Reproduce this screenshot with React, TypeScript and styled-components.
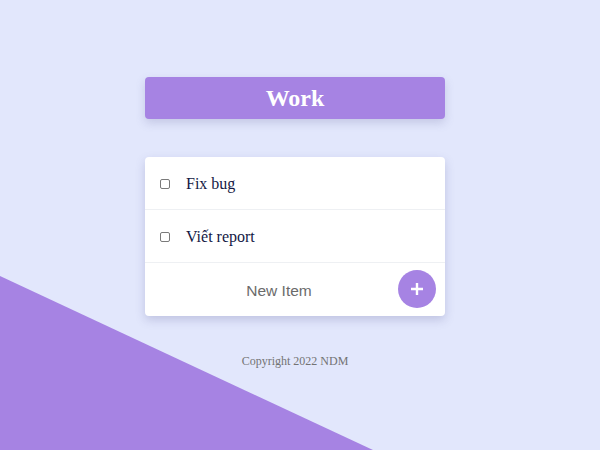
import React from "react";
import styled, { createGlobalStyle } from "styled-components";

const Global = createGlobalStyle`
  html, body { margin: 0; padding: 0; }
  body {
    background: #e2e7fc;
    font-family: "Liberation Serif", "Times New Roman", serif;
    overflow: hidden;
  }
`;

const Page = styled.div`
  position: relative;
  width: 600px;
  height: 450px;
  overflow: hidden;
`;

const Wedge = styled.div`
  position: absolute;
  left: 0;
  top: 0;
  width: 600px;
  height: 450px;
  background: #a683e3;
  clip-path: polygon(0 276px, 373px 450px, 0 450px);
`;

const Column = styled.main`
  position: relative;
  width: 300px;
  margin: 0 auto;
  padding-top: 77px;
  transform: translateX(-5px);
  display: flex;
  flex-direction: column;
`;

const Title = styled.h1`
  margin: 0;
  height: 42px;
  background: #a683e3;
  border-radius: 4px;
  box-shadow: 0 4px 10px rgba(90, 90, 150, 0.22);
  color: #fff;
  font-family: "Liberation Serif", "Times New Roman", serif;
  font-weight: bold;
  font-size: 24px;
  display: flex;
  align-items: center;
  justify-content: center;
`;

const Card = styled.section`
  margin-top: 38px;
  background: #fff;
  border-radius: 4px;
  box-shadow: 0 4px 10px rgba(90, 90, 150, 0.25);
  display: flex;
  flex-direction: column;
`;

const Row = styled.div`
  height: 53px;
  display: flex;
  align-items: center;
  padding-left: 15px;
  padding-top: 2px;
  border-bottom: 1px solid #eef0f3;
  box-sizing: border-box;
`;

const Check = styled.input`
  appearance: none;
  width: 10px;
  height: 10px;
  margin: 0 16px 0 0;
  border: 1px solid #7a7a7a;
  border-radius: 2px;
  background: #fff;
`;

const Label = styled.span`
  font-family: "Liberation Serif", "Times New Roman", serif;
  font-size: 16px;
  color: #131844;
`;

const Footer = styled.div`
  height: 53px;
  display: flex;
  align-items: center;
  position: relative;
`;

const NewItem = styled.input`
  border: none;
  outline: none;
  background: transparent;
  flex: 1;
  text-align: center;
  font-family: "Liberation Sans", Arial, sans-serif;
  font-size: 15.5px;
  color: #666;
  padding: 2px 0 0 0;
  margin-right: 32px;
  &::placeholder { color: #6b6b6b; }
`;

const AddButton = styled.button`
  position: absolute;
  right: 9px;
  top: 7px;
  width: 38px;
  height: 38px;
  border-radius: 50%;
  border: none;
  background: #a683e3;
  padding: 0;
  display: flex;
  align-items: center;
  justify-content: center;
`;

const Copy = styled.footer`
  margin-top: 38px;
  text-align: center;
  font-family: "Liberation Serif", "Times New Roman", serif;
  font-size: 12px;
  color: #737373;
`;

export default function App() {
  const items = ["Fix bug", "Viết report"];
  return (
    <Page>
      <Global />
      <Wedge />
      <Column>
        <Title>Work</Title>
        <Card>
          {items.map((t) => (
            <Row key={t}>
              <Check type="checkbox" />
              <Label>{t}</Label>
            </Row>
          ))}
          <Footer>
            <NewItem placeholder="New Item" />
            <AddButton>
              <svg width="14" height="14" viewBox="0 0 14 14">
                <path d="M7 1v12M1 7h12" stroke="#fff" strokeWidth="2.4" />
              </svg>
            </AddButton>
          </Footer>
        </Card>
        <Copy>Copyright 2022 NDM</Copy>
      </Column>
    </Page>
  );
}
